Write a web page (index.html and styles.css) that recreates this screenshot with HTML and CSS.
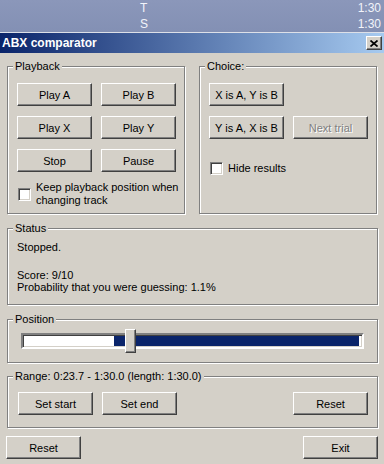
FILE: index.html
```html
<!DOCTYPE html>
<html lang="en">
<head>
    <meta charset="UTF-8">
    <title>ABX comparator</title>
    <link rel="stylesheet" href="styles.css">
</head>
<body>
    <div class="list">
        <div class="list-row"><span class="col-title">T</span><span class="col-time">1:30</span></div>
        <div class="list-row"><span class="col-title">S</span><span class="col-time">1:30</span></div>
    </div>
    <div class="dialog">
        <div class="titlebar">
            <span class="caption">ABX comparator</span>
            <button class="close">
                <svg width="8" height="7" viewBox="0 0 8 7"><path d="M0.5 0.5 L7.5 6.5 M7.5 0.5 L0.5 6.5" stroke="#000" stroke-width="1.7" fill="none"/></svg>
            </button>
        </div>
        <div class="client">
            <div class="top-row">
                <div class="group playback">
                    <span class="group-title">Playback</span>
                    <div class="btn-grid">
                        <button class="btn">Play A</button>
                        <button class="btn">Play B</button>
                        <button class="btn">Play X</button>
                        <button class="btn">Play Y</button>
                        <button class="btn">Stop</button>
                        <button class="btn">Pause</button>
                    </div>
                    <label class="check keep">
                        <span class="box"></span>
                        <span>Keep playback position when<br>changing track</span>
                    </label>
                </div>
                <div class="group choice">
                    <span class="group-title">Choice:</span>
                    <div class="btn-grid">
                        <button class="btn">X is A, Y is B</button>
                        <span></span>
                        <button class="btn">Y is A, X is B</button>
                        <button class="btn" disabled>Next trial</button>
                    </div>
                    <label class="check hide">
                        <span class="box"></span>
                        <span>Hide results</span>
                    </label>
                </div>
            </div>

            <div class="group status">
                <span class="group-title">Status</span>
                <div class="status-first">Stopped.</div>
                <div class="status-score">Score: 9/10<br>Probability that you were guessing: 1.1%</div>
            </div>

            <div class="group position">
                <span class="group-title">Position</span>
                <div class="track">
                    <div class="selection"></div>
                    <div class="thumb"></div>
                </div>
            </div>

            <div class="group range">
                <span class="group-title">Range: 0:23.7 - 1:30.0 (length: 1:30.0)</span>
                <div class="range-row">
                    <button class="btn">Set start</button>
                    <button class="btn">Set end</button>
                    <button class="btn push-right">Reset</button>
                </div>
            </div>

            <div class="bottom-row">
                <button class="btn">Reset</button>
                <button class="btn">Exit</button>
            </div>
        </div>
    </div>
</body>
</html>
```
FILE: styles.css
```css
*{
    box-sizing: border-box;
}
body{
    margin: 0;
    width: 384px;
    height: 464px;
    overflow: hidden;
    font-family: "Liberation Sans", Arial, sans-serif;
    font-size: 11px;
    background-color: #d4d0c8;
}
.list{
    background: linear-gradient(#8b97ba, #8390b4);
    border-bottom: 1px solid #dde0e8;
    color: #f2f4fa;
    font-size: 12px;
}
.list-row{
    display: flex;
    justify-content: space-between;
    height: 16px;
    line-height: 16px;
    padding: 0 3px 0 140px;
}
.titlebar{
    height: 20px;
    display: flex;
    align-items: center;
    justify-content: space-between;
    padding: 0 2px;
    background: linear-gradient(to right, #0a246a, #a6caf0);
    color: white;
}
.caption{
    font-weight: bold;
    font-size: 12px;
}
.close{
    width: 16px;
    height: 14px;
    padding: 0;
    display: flex;
    align-items: center;
    justify-content: center;
    background-color: #d4d0c8;
    border: 1px solid;
    border-color: #fff #404040 #404040 #fff;
    box-shadow: inset -1px -1px #808080;
}
.client{
    padding: 13px 6px 0 7px;
}
.top-row{
    display: grid;
    grid-template-columns: 178px 178px;
    column-gap: 14px;
}
.group{
    position: relative;
    border: 1px solid #808080;
    box-shadow: inset 1px 1px #fff, 1px 1px #fff;
}
.group-title{
    position: absolute;
    top: -7px;
    left: 5px;
    padding: 0 2px;
    line-height: 13px;
    background-color: #d4d0c8;
}
.playback, .choice{
    height: 148px;
    padding: 16px 0 0 9px;
}
.choice{
    padding-left: 9px;
}
.btn-grid{
    display: grid;
    grid-template-columns: 75px 75px;
    column-gap: 9px;
    row-gap: 10px;
}
.btn{
    width: 75px;
    height: 23px;
    padding: 0;
    font-family: "Liberation Sans", Arial, sans-serif;
    font-size: 11px;
    color: #000;
    background-color: #d4d0c8;
    border: 1px solid;
    border-color: #fff #404040 #404040 #fff;
    box-shadow: inset -1px -1px #808080;
}
.btn:disabled{
    color: #808080;
    text-shadow: 1px 1px #fff;
}
.check{
    display: flex;
    align-items: center;
    gap: 5px;
    line-height: 13px;
}
.keep{
    margin: 9px 0 0 1px;
}
.hide{
    margin: 23px 0 0 1px;
}
.box{
    width: 13px;
    height: 13px;
    flex-shrink: 0;
    background-color: #fff;
    border: 1px solid;
    border-color: #808080 #fff #fff #808080;
    box-shadow: inset 1px 1px #404040, inset -1px -1px #d4d0c8;
}
.status{
    margin-top: 14px;
    height: 77px;
    padding: 12px 0 0 9px;
}
.status-first{
    line-height: 13px;
    margin-bottom: 15px;
}
.status-score{
    line-height: 12px;
}
.position{
    margin-top: 14px;
    height: 44px;
    padding: 13px 0 0 13px;
}
.track{
    position: relative;
    width: 343px;
    height: 16px;
    background-color: #fff;
    border: 2px solid;
    border-color: #808080 #fff #fff #808080;
    box-shadow: inset 1px 1px #404040, inset -1px -1px #d4d0c8;
}
.selection{
    position: absolute;
    left: 91px;
    top: 1px;
    width: 245px;
    height: 10px;
    background-color: #0a246a;
}
.thumb{
    position: absolute;
    left: 102px;
    top: -6px;
    width: 11px;
    height: 24px;
    background-color: #d4d0c8;
    border: 1px solid;
    border-color: #fff #404040 #404040 #fff;
    box-shadow: inset -1px -1px #808080;
}
.range{
    margin-top: 13px;
    height: 52px;
    padding: 15px 9px 0 10px;
}
.range-row{
    display: flex;
    gap: 9px;
}
.push-right{
    margin-left: auto;
}
.bottom-row{
    display: flex;
    justify-content: space-between;
    margin: 8px 0 0 -1px;
}
```
